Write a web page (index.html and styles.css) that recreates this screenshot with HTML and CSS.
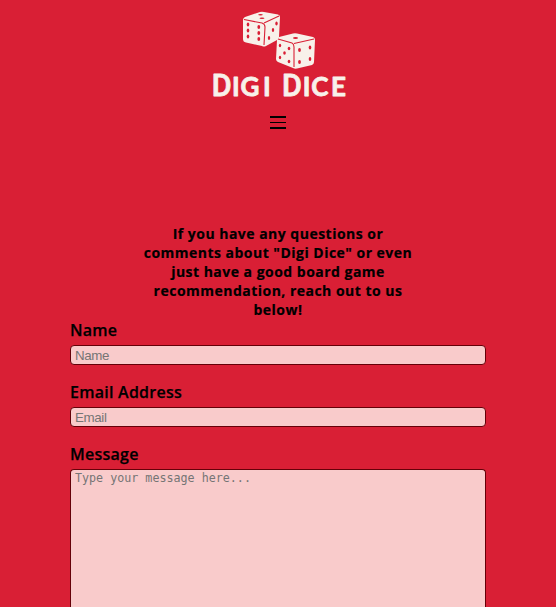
FILE: index.html
```
<!DOCTYPE html>
<html lang="en">
<head>
<meta charset="utf-8">
<title>Digi Dice</title>
<link rel="stylesheet" href="styles.css">
</head>
<body>
<header class="header">
  <svg class="logo" width="140" height="92" viewBox="208 8 140 92">
    <g class="die">
      <path d="M243 20Q243 18 245 17L260 12Q262 11.500 264 12L278 14.500Q280 15 280 17L279 37Q279 39 277 40L266 46Q264 47 262 46L246 42.500Q243 42 243 39Z"/>
      <path d="M277 40Q277 38 279 37L293 33.500Q295 33 297 33.500L313 37Q315 37.500 315 40L314 62Q314 64 312 65L297 68.500Q295 69 293 68L278 62Q276 61 276 59Z"/>
    </g>
    <g class="edge">
      <path d="M244 19.500L262 23Q265 24 265 27L264 45M264 23L279 16"/>
      <path d="M278 39L292 43Q294 44 294 47V67M294 43.500L314 39"/>
    </g>
    <g class="pips">
      <ellipse cx="260.500" cy="14.700" rx="2.300" ry=".8"/><ellipse cx="262" cy="18.200" rx="2.500" ry=".8"/>
      <ellipse cx="248" cy="24.500" rx="1.300" ry="1.900"/><ellipse cx="248" cy="30.500" rx="1.300" ry="1.900"/><ellipse cx="248" cy="36.500" rx="1.300" ry="1.900"/>
      <ellipse cx="258.800" cy="27" rx="1.400" ry="1.900"/><ellipse cx="258.800" cy="33" rx="1.400" ry="1.900"/><ellipse cx="258.800" cy="39" rx="1.400" ry="1.900"/>
      <ellipse cx="276.500" cy="23.500" rx="1.200" ry="1.900"/><ellipse cx="273" cy="30" rx="1.200" ry="1.900"/><ellipse cx="269" cy="38" rx="1.200" ry="1.900"/>
      <ellipse cx="295.500" cy="38" rx="2.500" ry=".9"/>
      <ellipse cx="280" cy="45.500" rx="1.200" ry="1.800"/><ellipse cx="289" cy="48.500" rx="1.300" ry="1.800"/><ellipse cx="284.500" cy="53" rx="1.300" ry="1.800"/><ellipse cx="280" cy="57.500" rx="1.200" ry="1.800"/><ellipse cx="289" cy="61.500" rx="1.300" ry="1.800"/>
      <ellipse cx="299.500" cy="50" rx="1.400" ry="1.900"/><ellipse cx="310" cy="47.500" rx="1.300" ry="1.900"/><ellipse cx="299.500" cy="62" rx="1.400" ry="1.900"/><ellipse cx="310" cy="59" rx="1.300" ry="1.900"/>
    </g>
    <text class="wordmark" y="96.300"><tspan class="cap" x="211.800">D</tspan><tspan x="232.100">I</tspan><tspan x="240.600">G</tspan><tspan x="263">I</tspan> <tspan class="cap" x="282">D</tspan><tspan x="302.700">I</tspan><tspan x="311.200">C</tspan><tspan x="330.900">E</tspan></text>
  </svg>
  <button class="menu" aria-label="Menu"><span class="bar"></span><span class="bar thin"></span><span class="bar"></span></button>
</header>
<main class="contact">
  <h1 class="intro">If you have any questions or comments about "Digi Dice" or even just have a good board game recommendation, reach out to us below!</h1>
  <form class="form">
    <label class="label" for="name">Name</label>
    <input class="field" id="name" type="text" placeholder="Name">
    <label class="label" for="email">Email Address</label>
    <input class="field" id="email" type="email" placeholder="Email">
    <label class="label" for="message">Message</label>
    <textarea class="field message" id="message" placeholder="Type your message here..."></textarea>
  </form>
</main>
</body>
</html>
```
FILE: styles.css
```
* { box-sizing: border-box; }
html { overflow: hidden; }
body {
  margin: 0;
  height: 607px;
  overflow: hidden;
  background: #d91f35;
  color: #000;
  font-family: "Open Sans", sans-serif;
}
.header {
  display: flex;
  flex-direction: column;
  align-items: center;
  padding-top: 8px;
}
.logo { display: block; overflow: visible; }
.die { fill: #f8f1ea; }
.edge { fill: none; stroke: #d91f35; stroke-width: 1.1; }
.pips { fill: #d91f35; }
.wordmark {
  fill: #f8f1ea;
  stroke: #f8f1ea;
  stroke-width: .8;
  stroke-linejoin: round;
  font: 700 26px Lato, sans-serif;
}
.cap { font: 500 30.5px Roboto, sans-serif; }
.menu {
  display: flex;
  flex-direction: column;
  justify-content: space-between;
  width: 16px;
  height: 13px;
  margin-top: 16px;
  padding: 0;
  border: 0;
  background: none;
}
.bar { height: 2px; background: #000; }
.bar.thin { height: 1px; }
.contact {
  width: 416px;
  margin: 95px auto 0;
}
.intro {
  width: 278px;
  margin: 0 auto;
  font-size: 14px;
  line-height: 19px;
  font-weight: 700;
  letter-spacing: .48px;
  text-align: center;
  -webkit-text-stroke: .2px #000;
}
.form { display: flex; flex-direction: column; }
.label {
  font-size: 16px;
  line-height: 22px;
  font-weight: 650;
  letter-spacing: .25px;
  margin-bottom: 4px;
  -webkit-text-stroke: .25px #000;
}
.field {
  width: 100%;
  height: 20px;
  margin: 0 0 16px;
  padding: 1px 4px;
  border: 1px solid #650008;
  border-radius: 4px;
  background: #f9cbcb;
  font: 13.333px "Liberation Sans", sans-serif;
  letter-spacing: -.35px;
}
.message {
  height: 138px;
  margin-bottom: 0;
  border-bottom: 0;
  border-radius: 4px 4px 0 0;
  resize: none;
  font: 11.7px/14px "DejaVu Sans Mono", monospace;
  letter-spacing: 0;
}
.field::placeholder { color: #757575; }
```
